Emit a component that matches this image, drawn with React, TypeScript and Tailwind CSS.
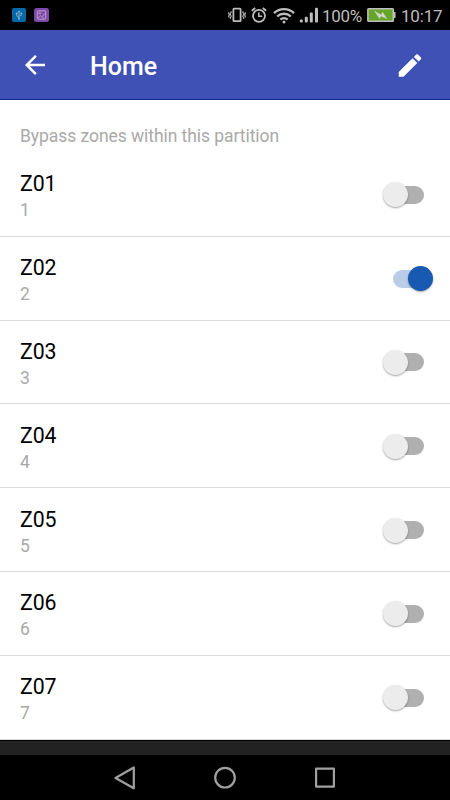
import { useState } from 'react'
import clsx from 'clsx'

interface Zone {
  id: number
  name: string
  bypassed: boolean
}

const ZONES: Zone[] = [
  { id: 1, name: 'Z01', bypassed: false },
  { id: 2, name: 'Z02', bypassed: true },
  { id: 3, name: 'Z03', bypassed: false },
  { id: 4, name: 'Z04', bypassed: false },
  { id: 5, name: 'Z05', bypassed: false },
  { id: 6, name: 'Z06', bypassed: false },
  { id: 7, name: 'Z07', bypassed: false },
]

function StatusBar() {
  return (
    <div className="flex h-[30px] shrink-0 items-center bg-black pl-3 pr-2 text-[#bdbdbd]">
      {/* Notifications */}
      <svg width="14" height="14" viewBox="0 0 14 14" fill="none">
        <rect width="14" height="14" rx="2" fill="#0369a8" />
        <path d="M7 11V3.5M5.8 4.4 7 2.8l1.2 1.6M7 9.3 4.7 7.9V5.5M7 8.3l2.3-1V5.2" stroke="#8aafc8" strokeWidth="0.9" />
        <circle cx="7" cy="10.8" r="1" fill="#8aafc8" />
        <circle cx="4.7" cy="5.4" r="0.9" fill="#8aafc8" />
        <path d="M8.5 4.6h1.6v1.5H8.5z" fill="#8aafc8" />
      </svg>
      <svg className="ml-[8px]" width="15" height="14" viewBox="0 0 15 14" fill="none">
        <rect width="15" height="14" rx="2.5" fill="#7d49a6" />
        <rect x="3.3" y="2.8" width="8.4" height="8.4" rx="0.7" stroke="#c3a8d6" strokeWidth="0.9" />
        <path d="m3.5 10.5 3-2.8 1.4 1.1 3.6-3.6M8.2 9l1.8 1.8" stroke="#c3a8d6" strokeWidth="0.8" />
        <circle cx="5.7" cy="5.2" r="0.9" stroke="#c3a8d6" strokeWidth="0.7" />
      </svg>

      <div className="ml-auto flex items-center">
        {/* Vibrate */}
        <svg width="18" height="16" viewBox="0 0 18 16" fill="none" stroke="currentColor">
          <rect x="5.4" y="1.7" width="7.2" height="12.5" rx="0.7" strokeWidth="1.8" />
          <path d="M3 4.2v2M2.4 6.2v2M3 8.2v2M2.4 10.2v1.6M.8 5.2v2M1.3 7.2v1.4M.8 8.6v1.8M15 4.2v2M15.6 6.2v2M15 8.2v2M15.6 10.2v1.6M17.2 5.2v2M16.7 7.2v1.4M17.2 8.6v1.8" strokeWidth="1.2" />
        </svg>
        {/* Alarm */}
        <svg className="ml-[5px]" width="16" height="16" viewBox="0 0 16 16" fill="none" stroke="currentColor">
          <circle cx="8" cy="8.8" r="6" strokeWidth="1.8" />
          <path d="M.8 3.8 4.2 1M15.2 3.8 11.8 1" strokeWidth="1.8" />
          <path d="M7.8 5.5v3.8h3.4" strokeWidth="1.5" />
        </svg>
        {/* Wifi */}
        <svg className="ml-[6px]" width="22" height="17" viewBox="0 0 22 17" fill="none" stroke="currentColor" strokeWidth="2.3">
          <path d="M1 6.1a14.4 14.4 0 0 1 20 0M4.2 9.5a9.8 9.8 0 0 1 13.6 0M7.4 12.7a5.2 5.2 0 0 1 7.2 0" />
          <circle cx="11" cy="14.9" r="1.5" fill="currentColor" stroke="none" />
        </svg>
        {/* Signal */}
        <svg className="ml-[4px]" width="20" height="16" viewBox="0 0 20 16" fill="currentColor">
          <rect x="0.8" y="12.5" width="3" height="3" rx="1" />
          <rect x="5.8" y="9.7" width="3" height="5.8" rx="1" />
          <rect x="10.8" y="5.5" width="3" height="10" rx="1" />
          <rect x="16" y="0.8" width="3" height="14.7" rx="1" />
        </svg>
        <span className="ml-[3px] mt-px w-[41px] whitespace-nowrap text-[17px] leading-[30px] tracking-[-0.3px]">100%</span>
        {/* Battery */}
        <svg className="ml-[4px]" width="29" height="16" viewBox="0 0 29 16">
          <rect x="0.9" y="1.8" width="25.4" height="12.4" rx="0.8" fill="#67a52a" stroke="#bdbdbd" strokeWidth="1.6" />
          <rect x="26.7" y="5" width="1.8" height="6" rx="0.6" fill="#bdbdbd" />
          <path d="M7.7 4.2 14.2 8l1.3-2.8 4.2 6.3L13.8 9l-1.3 2.4z" fill="#d3d8cc" stroke="#d3d8cc" strokeWidth="0.5" />
        </svg>
        <span className="ml-[5px] mt-px w-[41px] whitespace-nowrap text-[17px] leading-[30px] tracking-[-0.2px]">10:17</span>
      </div>
    </div>
  )
}

function AppBar() {
  return (
    <header className="flex h-[70px] shrink-0 items-center border-b border-[#102a9c] bg-[#3f51b5] pl-[20px] pr-[25px] text-white">
      <button aria-label="Back" className="flex h-[30px] w-[30px] items-center justify-center">
        <svg width="30" height="30" viewBox="0 0 24 24" fill="currentColor">
          <path d="M20 11H7.83l5.59-5.59L12 4l-8 8 8 8 1.41-1.41L7.83 13H20v-2z" />
        </svg>
      </button>
      <h1 className="ml-[40px] mt-[5px] text-[25px] font-medium leading-[30px]">Home</h1>
      <button aria-label="Edit" className="ml-auto mt-px flex h-[30px] w-[30px] items-center justify-center">
        <svg width="31" height="31" viewBox="0 0 24 24" fill="currentColor">
          <path d="M3 17.25V21h3.75L17.81 9.94l-3.75-3.75L3 17.25zM20.71 7.04a.996.996 0 0 0 0-1.41l-2.34-2.34a.996.996 0 0 0-1.41 0l-1.83 1.83 3.75 3.75 1.83-1.83z" />
        </svg>
      </button>
    </header>
  )
}

interface ToggleProps {
  label: string
  checked: boolean
  onChange: () => void
}

function Toggle({ label, checked, onChange }: ToggleProps) {
  return (
    <button
      role="switch"
      aria-label={label}
      aria-checked={checked}
      onClick={onChange}
      className="relative mt-px flex h-[25px] w-[50px] items-center justify-center"
    >
      <span className={clsx('h-[18px] w-[31px] rounded-full', checked ? 'bg-[#b9cde8]' : 'bg-[#b0b0b0]')} />
      <span
        className={clsx(
          'absolute top-0 h-[25px] w-[25px] rounded-full shadow-[0_1px_2px_rgba(0,0,0,0.35)]',
          checked ? 'right-0 bg-[#185ab1]' : 'left-0 bg-[#ececec]',
        )}
      />
    </button>
  )
}

export default function App() {
  const [zones, setZones] = useState(ZONES)

  const toggle = (id: number) => {
    setZones(zones.map(z => (z.id === id ? { ...z, bypassed: !z.bypassed } : z)))
  }

  return (
    <div className="flex h-[800px] w-[450px] flex-col overflow-hidden bg-white font-['Roboto',sans-serif]">
      <StatusBar />
      <AppBar />

      <main className="flex-1 bg-white">
        <p className="h-[53px] pl-[20px] pt-[25px] text-[17.5px] leading-[22px] tracking-[-0.06px] text-[#a9a9a9]">
          Bypass zones within this partition
        </p>
        {zones.map(zone => (
          <div key={zone.id} className="flex h-[83.8px] items-center justify-between border-b border-[#dcdcdc] pl-[20px] pr-[17px]">
            <div className="pt-[6px]">
              <div className="text-[21.3px] leading-[26px] tracking-[-0.1px] text-black">{zone.name}</div>
              <div className="text-[17.5px] leading-[26px] text-[#a9a9a9]">{zone.id}</div>
            </div>
            <Toggle label={zone.name} checked={zone.bypassed} onChange={() => toggle(zone.id)} />
          </div>
        ))}
      </main>

      <div className="h-[15px] shrink-0 border-t border-black bg-[#222222]" />

      {/* Navigation */}
      <nav className="flex h-[45px] shrink-0 items-center justify-center gap-[76px] bg-black text-[#a0a0a0]">
        <svg width="24" height="24" viewBox="0 0 24 24" fill="none" stroke="currentColor" strokeWidth="2.2" strokeLinejoin="round">
          <path d="M20.8 1.5v20.8L2.5 12z" />
        </svg>
        <svg width="24" height="24" viewBox="0 0 24 24" fill="none" stroke="currentColor" strokeWidth="2.2">
          <circle cx="12" cy="11.7" r="9.8" />
        </svg>
        <svg width="24" height="24" viewBox="0 0 24 24" fill="none" stroke="currentColor" strokeWidth="2.2" strokeLinejoin="round">
          <rect x="3.1" y="2.7" width="17.8" height="18" />
        </svg>
      </nav>
    </div>
  )
}
